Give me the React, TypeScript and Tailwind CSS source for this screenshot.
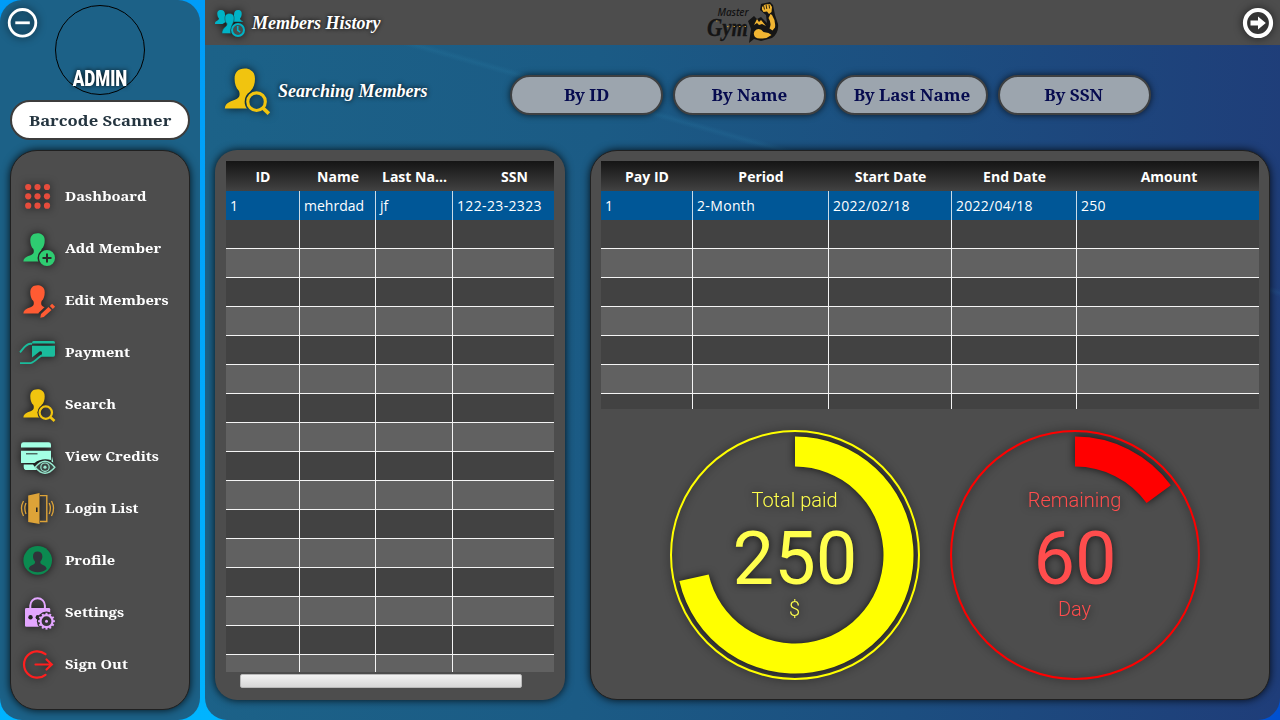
import { useId } from "react";
import type { ReactNode } from "react";

const PERSON =
  "M17.5 3.2C12.8 3.2 10.2 6 10.3 10.4c0 3.6.9 6.400 3.100 8.700.8 2.300.6 4.300-1.400 5.500C8.300 26.400 3.800 27 3.400 31.400H31.500C31.200 27 26.700 26.400 23 24.600c-2-1.200-2.200-3.200-1.400-5.500 2.200-2.300 3.100-5.100 3.100-8.700 0-3-1-5-2.800-5.900C20.800 3.500 19.400 3.200 17.500 3.200Z";

const SHADOW = "drop-shadow-[0_0_4px_rgba(0,0,0,0.75)]";

function Icon({ children, className = "" }: { children: ReactNode; className?: string }) {
  return (
    <svg viewBox="0 0 36 36" className={`size-9 shrink-0 overflow-visible ${SHADOW} ${className}`}>
      {children}
    </svg>
  );
}

function SearchPerson({ className = "" }: { className?: string }) {
  const id = useId();
  return (
    <Icon className={className}>
      <mask id={id}>
        <rect width="36" height="36" fill="white" />
        <circle cx="25.800" cy="26.600" r="8.400" fill="black" />
        <rect x="25" y="20" width="11" height="16" fill="black" />
      </mask>
      <path d={PERSON} fill="#f1c40f" mask={`url(#${id})`} />
      <circle cx="25.800" cy="26.600" r="6.200" fill="none" stroke="#f1c40f" strokeWidth="2.200" />
      <path d="M30.200 31l4.300 4" stroke="#f1c40f" strokeWidth="2.600" />
    </Icon>
  );
}

function AddPerson() {
  return (
    <Icon>
      <mask id="add-cut">
        <rect width="36" height="36" fill="white" />
        <circle cx="27" cy="28" r="9.500" fill="black" />
        <rect x="26" y="20" width="10" height="16" fill="black" />
      </mask>
      <path d={PERSON} fill="#2ecc71" mask="url(#add-cut)" />
      <path
        fillRule="evenodd"
        fill="#2ecc71"
        d="M27 20a8 8 0 1 0 0 16a8 8 0 1 0 0-16ZM26 23.500h2v3.500h3.500v2h-3.500v3.500h-2v-3.500h-3.500v-2h3.500Z"
      />
    </Icon>
  );
}

function EditPerson() {
  return (
    <Icon>
      <mask id="edit-cut">
        <rect width="36" height="36" fill="white" />
        <path d="M16.500 36L19 30.500 30 20l6 0v16Z" fill="black" />
      </mask>
      <path d={PERSON} fill="#ff5b33" mask="url(#edit-cut)" />
      <path d="M21 32l7.500-7 3 3-7.700 7-3.500.8ZM29.800 23.900l2.300-2.200 3 3-2.300 2.200Z" fill="#ff5b33" />
    </Icon>
  );
}

const gearTeeth = Array.from({ length: 12 }, (_, i) => i * 30);

const menu: { label: string; icon: ReactNode }[] = [
  {
    label: "Dashboard",
    icon: (
      <Icon>
        {[9, 18.300, 27.700].map((y) =>
          [8.200, 17.500, 27].map((x) => <circle key={`${x}-${y}`} cx={x} cy={y} r="3.100" fill="#e74c3c" />),
        )}
      </Icon>
    ),
  },
  { label: "Add Member", icon: <AddPerson /> },
  { label: "Edit Members", icon: <EditPerson /> },
  {
    label: "Payment",
    icon: (
      <Icon>
        <path d="M12 8.500q0-1.500 1.500-1.500H33.500q1.500 0 1.500 1.500v.9H12Z" fill="#1abc9c" />
        <path d="M12 11.800H35V21q0 1.700-1.700 1.700H20.500L22 19.500q.4-2.800-2.400-2.100L12 23.500Z" fill="#1abc9c" />
        <path d="M0 18.300C3.500 14.500 5.500 10.200 10 9.800H12M0 29.100H10.500C14 28.500 18 24 21.200 21.400" fill="none" stroke="#1abc9c" strokeWidth="1.900" />
      </Icon>
    ),
  },
  { label: "Search", icon: <SearchPerson /> },
  {
    label: "View Credits",
    icon: (
      <Icon>
        <path d="M1 9.500V6.500Q1.300 4.300 3.500 4.300H28.500Q31 4.300 31 6.500V9.500Z" fill="#a3ffe4" />
        <path d="M1 12.800H31V22C26 20.500 19 21 14.500 25H1Z" fill="#a3ffe4" />
        <path d="M3.700 26.500H13L17 32H5.500Q3.700 31.500 3.700 29ZM32 18.500l1.300 6-1.800-1Z" fill="#a3ffe4" />
        <path d="M6 15.800H17.500" stroke="#303b38" strokeWidth="1.100" />
        <path d="M15.200 29.200Q25 17.200 34.800 29.200Q25 41.200 15.200 29.200Z" fill="#3c4744" stroke="#98e8cf" strokeWidth="1.400" />
        <circle cx="25" cy="29.200" r="4.200" fill="none" stroke="#98e8cf" strokeWidth="1.200" />
        <circle cx="25" cy="29.200" r="1.600" fill="#98e8cf" />
      </Icon>
    ),
  },
  {
    label: "Login List",
    icon: (
      <Icon>
        <path fillRule="evenodd" fill="#dda338" d="M8.200 5.500L19.500 3V34L8.200 32ZM16 17.500v4.500h1.600v-4.500Z" />
        <path d="M20 5.600H26.800V31.500H20" fill="none" stroke="#dda338" strokeWidth="1.400" />
        <path d="M6 13Q3.600 18.300 6 24M3.500 11Q-.6 18.300 3.500 26M29.200 13Q31.600 18.300 29.200 24M31.500 11Q35.600 18.300 31.500 26" fill="none" stroke="#dda338" strokeWidth="1.300" />
      </Icon>
    ),
  },
  {
    label: "Profile",
    icon: (
      <Icon>
        <circle cx="17.700" cy="18.400" r="14.300" fill="#0b8a50" />
        <path
          d="M17.500 9.500c-3 0-4.500 2-4.500 4.700 0 2.100.6 3.800 1.900 5.100.3 1.600.1 2.500-1.400 3.100-2.200.8-4.300 1.600-4.800 4.600C14 31.300 21.500 31.300 26.700 27c-.5-3-2.600-3.800-4.800-4.600-1.500-.6-1.700-1.500-1.400-3.100 1.300-1.300 1.900-3 1.900-5.100 0-2.700-1.900-4.700-4.900-4.700Z"
          fill="#30343a"
        />
      </Icon>
    ),
  },
  {
    label: "Settings",
    icon: (
      <Icon>
        <mask id="lock-cut">
          <rect width="36" height="36" fill="white" />
          <circle cx="26.500" cy="27.200" r="9.600" fill="black" />
          <circle cx="10.500" cy="23.300" r="2.200" fill="black" />
          <circle cx="17.800" cy="23.300" r="2.200" fill="black" />
        </mask>
        <path d="M10.300 14V11.500a7.300 7.300 0 0 1 14.600 0V14" fill="none" stroke="#e3a6ff" strokeWidth="2" />
        <rect x="5" y="14" width="25.200" height="18.700" rx="1.300" fill="#e3a6ff" mask="url(#lock-cut)" />
        <circle cx="26.500" cy="27.200" r="6" fill="none" stroke="#e3a6ff" strokeWidth="2.200" />
        {gearTeeth.map((a) => (
          <path key={a} d="M25.500 21V18.800h2v2.200Z" fill="#e3a6ff" transform={`rotate(${a} 26.500 27.200)`} />
        ))}
        <circle cx="26.500" cy="27.200" r="1.500" fill="#e3a6ff" />
      </Icon>
    ),
  },
  {
    label: "Sign Out",
    icon: (
      <Icon>
        <path d="M25.500 8.200A13.200 13.200 0 1 0 25.500 28.800M15.500 18.500H31.500M26.500 13.500L31.800 18.500 26.500 23.500" fill="none" stroke="#ff1f1f" strokeWidth="2.200" strokeLinecap="round" />
      </Icon>
    ),
  },
];

function Sidebar() {
  return (
    <aside className="flex h-[720px] w-[200px] shrink-0 flex-col rounded-[22px] bg-[#1c6187]">
      <div className="grid h-[100px] grid-cols-[55px_90px_55px] pt-[5px]">
        <button className="mt-[3px] ml-[8px] size-[29px]">
          <svg viewBox="0 0 29 29" className={`size-[29px] overflow-visible ${SHADOW}`}>
            <circle cx="14.500" cy="14.800" r="13.300" fill="none" stroke="white" strokeWidth="2.800" />
            <path d="M7.300 14.800H21.800" stroke="white" strokeWidth="2.800" />
          </svg>
        </button>
        <div className="flex size-[90px] items-end justify-center rounded-full border border-black pb-[6px]">
          <span className="origin-center scale-y-[1.250] font-['Roboto','Liberation_Sans',sans-serif] text-[17px] leading-[20px] font-black text-white [text-shadow:0_0_5px_black]">
            ADMIN
          </span>
        </div>
      </div>
      <button className="mx-[10px] flex h-[40px] shrink-0 items-center justify-center rounded-full border-2 border-[#3c3c3c] bg-white font-['Noto_Serif','DejaVu_Serif',serif] text-[15px] font-bold whitespace-nowrap text-[#24343f]">
        <span className="scale-x-[1.110] pt-px">Barcode Scanner</span>
      </button>
      <nav className="mx-[10px] mt-[10px] flex h-[560px] flex-col rounded-[27px] border border-[#202020] bg-[#4d4d4d] py-[19px] shadow-[0_0_9px_rgba(0,0,0,0.85)]">
        {menu.map((m) => (
          <a key={m.label} className="flex h-[52px] items-center gap-[9px] pl-[9px]">
            {m.icon}
            <span className="origin-left scale-x-[1.130] pt-[1px] font-['Noto_Serif','DejaVu_Serif',serif] text-[13px] font-bold whitespace-nowrap text-white">
              {m.label}
            </span>
          </a>
        ))}
      </nav>
    </aside>
  );
}

function GroupIcon() {
  return (
    <svg viewBox="0 0 30 28" className={`h-[28px] w-[30px] shrink-0 overflow-visible ${SHADOW}`}>
      <path d="M6 1c-3 0-3.800 2-3.700 4 .1 2 .6 3.300 1.600 4.300.3 2.500-3.900 2.500-3.900 5.200V15H7.500l4-2.500L10 6Q10 1 6 1ZM23 1c3 0 3.800 2 3.700 4-.1 2-.6 3.300-1.600 4.300-.2 2.100 2.200 2.400 3 3.500H18.500L19 6Q19 1 23 1Z" fill="#00b3c6" />
      <path d="M14.500 4.500c-3.600 0-4.700 2.300-4.600 5 .1 2.500.8 4 2 5.200.4 3.600-4.900 3.400-5 9.900H15.800C15 20 17 16.500 18.300 13.500q.8-1.500.8-4c.1-2.700-1-5-4.600-5Z" fill="#00b3c6" stroke="#26474c" strokeWidth=".6" />
      <circle cx="23" cy="21" r="6" fill="#4a4d4d" stroke="#00b3c6" strokeWidth="2" />
      <path d="M22.700 17V21.300L25.200 23.200" fill="none" stroke="#00b3c6" strokeWidth="1.600" />
    </svg>
  );
}

function Logo() {
  return (
    <svg viewBox="0 0 74 44" className="h-[44px] w-[74px] overflow-visible">
      <text x="10.500" y="14.500" textLength="31" fontSize="10" className="fill-[#121212] font-['Noto_Sans','Open_Sans',sans-serif] font-medium italic">
        Master
      </text>
      <text x="0" y="34.500" textLength="41" lengthAdjust="spacingAndGlyphs" fontSize="26" className="fill-[#151515] stroke-[#151515] stroke-[0.300] font-['Liberation_Serif',serif] font-bold italic">
        Gym
      </text>
      <path d="M9 20h1.500M20 25.500h1.500m5 0h1.500m4 0h1.500m4 0h1.500" stroke="#c3922e" strokeWidth="1.200" />
      <g transform="translate(-1 0)">
        <path d="M43 42L45 28 42 20 48 15 51 18 55 16 61 22 60 14 54 9 55 3 64 1 67 4 69 14 72 23Q73 32 66 37L55 40 48 38Z" fill="#151515" />
        <path d="M48 24l3-6 2 3 2-2 5 6-4-2-3 1-2-2Z" fill="#efb333" />
        <path d="M56 6l3-2.500 5-.5 2 3-.5 5-2.500 2-2-2.500-3.500.5-1.500-2.500ZM62.500 17l2-4 1.500 1q4 6 3 12.500l-2.500 3-3-2q2.500-5-1-10.500ZM49 36q-3-5 1.500-7.500 4-1.500 7 2.500l5 1 3 2q-5 4-10 3.500-4 .5-6.500-1.500Z" fill="#f1b532" />
        <path d="M57.500 4.500l1 4m1.500-5l.8 4.500m2.200-4.500l.6 4" stroke="#35280c" strokeWidth="1" />
      </g>
    </svg>
  );
}

function Header() {
  return (
    <header className="grid h-[45px] shrink-0 grid-cols-[1fr_74px_1fr] items-center bg-[#4d4d4d]">
      <div className="flex items-center gap-[6px] pt-[1px] pl-[10px]">
        <GroupIcon />
        <h1 className="pl-px font-['Liberation_Serif',serif] text-[18px] leading-none font-bold whitespace-nowrap text-white italic [text-shadow:0_0_4px_black]">
          Members History
        </h1>
      </div>
      <div className="pl-px">
        <Logo />
      </div>
      <button className="mr-[7px] justify-self-end">
        <svg viewBox="0 0 30 30" className={`size-[30px] overflow-visible ${SHADOW}`}>
          <circle cx="15" cy="15" r="13" fill="none" stroke="white" strokeWidth="4.200" />
          <path d="M7.500 12.500H15V8.500L22.800 15 15 21.500V17.500H7.500Z" fill="white" />
        </svg>
      </button>
    </header>
  );
}

type Column = { title: string; width: string; value: string; spacing?: string };

const memberColumns: Column[] = [
  { title: "ID", width: "w-[74px]", value: "1" },
  { title: "Name", width: "w-[76px]", value: "mehrdad" },
  { title: "Last Na...", width: "w-[77px]", value: "jf" },
  { title: "SSN", width: "w-[123px]", value: "122-23-2323", spacing: "tracking-[0.350px]" },
];

const paymentColumns: Column[] = [
  { title: "Pay ID", width: "w-[92px]", value: "1" },
  { title: "Period", width: "w-[136px]", value: "2-Month", spacing: "tracking-[0.350px]" },
  { title: "Start Date", width: "w-[123px]", value: "2022/02/18", spacing: "tracking-[0.250px]" },
  { title: "End Date", width: "w-[125px]", value: "2022/04/18", spacing: "tracking-[0.250px]" },
  { title: "Amount", width: "w-[184px]", value: "250", spacing: "tracking-[0.250px]" },
];

function DataTable({ columns, rows, className }: { columns: Column[]; rows: number; className: string }) {
  return (
    <div className={`flex flex-col overflow-hidden font-['Open_Sans','Noto_Sans',sans-serif] text-[14px] text-white ${className}`}>
      <div className="flex h-[30px] shrink-0 bg-linear-to-b from-[#151515] to-[#424242]">
        {columns.map((c) => (
          <div key={c.title} className={`flex shrink-0 items-center justify-center font-bold tracking-[0.020px] whitespace-nowrap ${c.width}`}>
            {c.title}
          </div>
        ))}
      </div>
      <div className="flex h-[29px] shrink-0 bg-[#005797]">
        {columns.map((c) => (
          <div key={c.title} className={`flex shrink-0 items-center border-r border-[#c9dbe8] pl-[4px] whitespace-nowrap last:border-r-0 ${c.width} ${c.spacing ?? ""}`}>
            {c.value}
          </div>
        ))}
      </div>
      {Array.from({ length: rows }, (_, r) => (
        <div key={r} className="flex h-[29px] shrink-0 border-b border-[#f4f4f4] even:bg-[#616161] odd:bg-[#424242]">
          {columns.map((c) => (
            <div key={c.title} className={`shrink-0 border-r border-[#f4f4f4] last:border-r-0 ${c.width}`} />
          ))}
        </div>
      ))}
    </div>
  );
}

type GaugeProps = {
  title: string;
  value: string;
  unit: string;
  color: string;
  textColor: string;
  sweep: number;
};

function Gauge({ title, value, unit, color, textColor, sweep }: GaugeProps) {
  const a = (sweep * Math.PI) / 180;
  const point = (r: number) => `${125 + r * Math.sin(a)} ${125 - r * Math.cos(a)}`;
  const large = sweep > 180 ? 1 : 0;
  return (
    <svg viewBox="0 0 250 250" className="size-[250px] overflow-visible">
      <g className={SHADOW}>
        <circle cx="125" cy="125" r="124" fill="none" stroke={color} strokeWidth="2" />
        <path d={`M125 6.500A118.500 118.500 0 ${large} 1 ${point(118.500)}L${point(88.500)}A88.500 88.500 0 ${large} 0 125 36.500Z`} fill={color} />
      </g>
      <g fill={textColor} textAnchor="middle" className={`font-['Roboto',sans-serif] ${SHADOW}`}>
        <text x="124.500" y="77" fontSize="20" className="font-light">
          {title}
        </text>
        <text x="125" y="154" fontSize="74">
          {value}
        </text>
        <text x="124.500" y="186" fontSize="20" className="font-light">
          {unit}
        </text>
      </g>
    </svg>
  );
}

const panel = "bg-[#4d4d4d] shadow-[0_0_9px_rgba(0,0,0,0.85)]";

export default function App() {
  return (
    <div className="flex h-[720px] w-[1280px] gap-[5px] overflow-hidden bg-[linear-gradient(to_right,transparent_230px,#0050d0_1280px),linear-gradient(to_bottom,#009cf8,#00b4ff)]">
      <Sidebar />
      <main className="flex h-[720px] w-[1075px] flex-col overflow-hidden rounded-b-[22px] bg-[linear-gradient(16deg,transparent_71.1%,rgba(60,170,210,0.09)_71.5%,transparent_71.9%),linear-gradient(92deg,#1c6288_0%,#1b5b85_36%,#1c4e80_66%,#1f3d79_100%)]">
        <Header />
        <div className="flex h-[105px] shrink-0 items-start">
          <div className="flex w-[305px] items-center gap-[6px] pt-[19px] pl-[15px]">
            <SearchPerson className="size-[51px]!" />
            <h2 className="pt-[2px] pl-px font-['Liberation_Serif',serif] text-[18px] leading-none font-bold whitespace-nowrap text-white italic [text-shadow:0_0_5px_black]">
              Searching Members
            </h2>
          </div>
          <div className="flex gap-[9.500px] pt-[30px]">
            {["By ID", "By Name", "By Last Name", "By SSN"].map((label) => (
              <button
                key={label}
                className="flex h-[40px] w-[153px] items-center justify-center rounded-full border-2 border-[#3e4042] bg-[#9ca5ae] font-['Noto_Serif','DejaVu_Serif',serif] text-[15.500px] font-bold whitespace-nowrap text-[#060b4f] shadow-[0_0_7px_rgba(0,0,0,0.7)]"
              >
                <span className="scale-x-[1.100] pt-px">{label}</span>
              </button>
            ))}
          </div>
        </div>
        <div className="flex gap-[25px] pl-[10px]">
          <section className={`h-[550px] w-[350px] rounded-[22px] px-[11px] pt-[11px] ${panel}`}>
            <DataTable columns={memberColumns} rows={16} className="h-[511px] w-[328px]" />
            <div className="mt-[2px] ml-[14px] h-[14px] w-[282px] rounded-[2px] border border-[#b9b9b9] bg-linear-to-b from-[#f2f2f2] to-[#d8d8d8]" />
          </section>
          <section className={`h-[550px] w-[680px] rounded-[27px] border border-[#202020] px-[10px] pt-[10px] ${panel}`}>
            <DataTable columns={paymentColumns} rows={7} className="h-[248px] w-[658px]" />
            <div className="mt-[21px] ml-[69px] flex gap-[30px]">
              <Gauge title="Total paid" value="250" unit="$" color="#ffff00" textColor="#ffff4d" sweep={257.300} />
              <Gauge title="Remaining" value="60" unit="Day" color="#ff0000" textColor="#ff4d4d" sweep={54} />
            </div>
          </section>
        </div>
      </main>
    </div>
  );
}
